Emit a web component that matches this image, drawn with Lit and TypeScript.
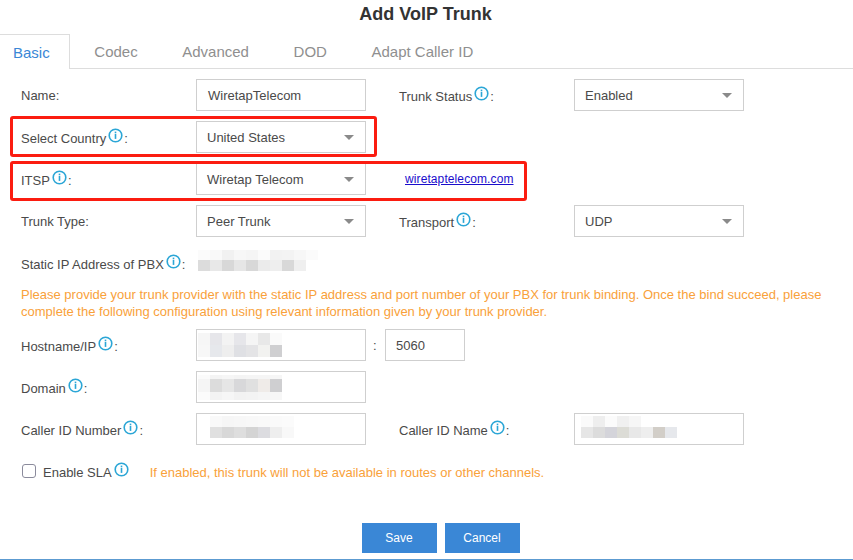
import { LitElement, html, css, svg } from 'lit';
import { customElement } from 'lit/decorators.js';

const info = html`<svg class="info" width="15" height="15" viewBox="0 0 15 15">
  ${svg`<circle cx="7.5" cy="7.5" r="6.3" fill="none" stroke="#2ba6d6" stroke-width="1.6"/>
  <rect x="6.7" y="3.6" width="1.6" height="1.6" fill="#2ba6d6"/>
  <rect x="6.7" y="5.9" width="1.6" height="5" fill="#2ba6d6"/>`}
</svg>`;

// pixelated areas where the reference has its values masked
const staticIp = [
  ['#fbfbfb', '#f9f9f9', '#f1f1f1', '#f7f7f7', '#f5f5f5', '#fbfbfb', '#f2f2f2', '#f3f3f3', '#f7f7f7', '#fbfbfb'],
  ['#dcdcdc', '#e8e8e8', '#d8d8d8', '#e6e6e6', '#d8d8d8', '#ebebeb', '#eeeeee', '#d8d8d8', '#efefef', '#ffffff'],
];
const hostIp = [
  ['#f6f6f6', '#e6e6ea', '#f3f3f3', '#e6e6ea', '#f5f5f5', '#e8e8e8', '#fafafa'],
  ['#f7f7f7', '#e6e8ec', '#eeeeee', '#dfe0e4', '#e4e4e6', '#f2f2f0', '#cfcfd1'],
];
const domainVal = [
  ['#fbfbfb', '#f4f4f4', '#f6f6f6', '#f4f4f4', '#f5f5f5', '#f5f5f5', '#f6f6f6'],
  ['#f5f5f5', '#dcdcdc', '#e6e6e6', '#d8d8da', '#e0e0e0', '#efebe8', '#cfcfd1'],
  ['#fbfbfb', '#f3f3f3', '#f6f6f6', '#f2f2f2', '#f3f3f3', '#f5f5f5', '#f7f7f7'],
];
const callerNum = [
  ['#f9f9f9', '#f6f6f6', '#f7f7f7', '#f8f8f8', '#f9f9f9', '#fafafa', '#fbfbfb'],
  ['#e0e0e0', '#d8d8d8', '#dedede', '#d4d4d4', '#dcdce0', '#eeeeee', '#f8f8f8'],
];
const callerName = [
  ['#fafafa', '#eeeeee', '#fbfbfb', '#f0f0f0', '#f6f6f6', '#ffffff', '#ffffff', '#ffffff'],
  ['#e6e6e6', '#dcdcdc', '#d4d4da', '#dcdcd6', '#e8e8e8', '#eeeeee', '#d2cec8', '#e6e8ec'],
];

@customElement('app-root')
export class AppRoot extends LitElement {
  static styles = css`
    :host {
      display: block;
      box-sizing: border-box;
      width: 853px;
      height: 560px;
      position: relative;
      overflow: hidden;
      background: #fff;
      font-family: 'Liberation Sans', Arial, sans-serif;
      font-size: 13px;
      color: #4a4a4a;
      border-bottom: 1px solid #5c9bd1;
    }

    h1 {
      margin: 0;
      height: 34px;
      padding: 4px 2px 0 0;
      box-sizing: border-box;
      text-align: center;
      font-size: 18px;
      line-height: 20px;
      font-weight: bold;
      color: #333;
    }

    .tabs {
      display: flex;
      height: 35px;
      box-sizing: border-box;
      border-bottom: 1px solid #ddd;
    }

    .tab {
      font-size: 15px;
      line-height: 36px;
      color: #8f8f8f;
      padding: 0 22.3px;
    }

    .tab.active {
      color: #3a87d6;
      width: 70px;
      margin-right: 2px;
      padding: 0 0 0 13px;
      height: 35px;
      box-sizing: border-box;
      border: 1px solid #ddd;
      border-width: 1px 1px 0 0;
      background: #fff;
    }

    .form {
      padding: 10px 0 0 21px;
    }

    .row {
      display: grid;
      grid-template-columns: 175px 170px 33px 175px 170px;
      align-items: center;
      height: 32px;
      margin-bottom: 10px;
    }

    .label {
      display: flex;
      align-items: center;
      white-space: nowrap;
    }

    .label.hinted {
      padding-top: 2px;
    }

    .info {
      margin: -5px 1px 0 2px;
      flex: none;
    }

    .field {
      box-sizing: border-box;
      height: 32px;
      width: 170px;
      border: 1px solid #cfcfcf;
      display: flex;
      align-items: center;
      padding: 0 11px;
      color: #4a4a4a;
      background: #fff;
    }

    .select {
      justify-content: space-between;
      padding: 0 11px 0 10px;
    }

    .caret {
      width: 0;
      height: 0;
      border-left: 5px solid transparent;
      border-right: 5px solid transparent;
      border-top: 5px solid #8a8a8a;
    }

    .link {
      color: #1a0dcc;
      text-decoration: underline;
      font-size: 12px;
      letter-spacing: 0.1px;
      margin-left: 6px;
    }

    .static-row {
      display: grid;
      grid-template-columns: 175px auto;
      align-items: center;
      height: 32px;
    }

    .note {
      color: #f9a13a;
      font-size: 13px;
      line-height: 17px;
      margin: 7px 0 9px;
      white-space: nowrap;
    }

    .port-row {
      grid-column: 3 / span 2;
      display: flex;
      align-items: center;
      padding-left: 7px;
    }

    .colon {
      width: 12px;
    }

    .port {
      width: 80px;
      padding: 0 10px;
    }

    .smudge {
      flex: none;
      filter: blur(0.4px);
    }

    .smudge-row {
      display: flex;
    }

    .cell {
      width: 12px;
    }

    .field.masked {
      padding: 0 0 0 1px;
    }

    .field.masked.caller {
      padding-left: 13px;
    }

    .field.masked.name {
      padding-left: 6px;
    }

    .field.masked.caller .smudge,
    .field.masked.name .smudge {
      margin-bottom: 4px;
    }

    .ip {
      margin: -6px 0 0 2px;
    }

    .sla {
      display: flex;
      align-items: center;
      height: 20px;
      margin-top: 17px;
    }

    .check {
      box-sizing: border-box;
      width: 14px;
      height: 14px;
      margin: -3px 0 0 1px;
      border: 1px solid #8b8b9c;
      border-radius: 3px;
      background: #fff;
    }

    .sla-text {
      margin-left: 7px;
    }

    .sla-note {
      color: #f9a13a;
      font-size: 13px;
      margin-left: 20px;
    }

    .actions {
      display: flex;
      justify-content: center;
      gap: 8px;
      margin-top: 41px;
      padding-left: 28px;
    }

    .btn {
      width: 75px;
      height: 30px;
      background: #3a87d6;
      color: #fff;
      font-size: 12px;
      display: flex;
      align-items: center;
      justify-content: center;
    }

    /* annotation boxes drawn over the screenshot */
    .mark {
      position: absolute;
      box-sizing: border-box;
      border: 3px solid #fb1c10;
      border-radius: 3px;
      pointer-events: none;
    }

    .mark.country {
      left: 10px;
      top: 116px;
      width: 367px;
      height: 41px;
    }

    .mark.itsp {
      left: 10px;
      top: 161px;
      width: 517px;
      height: 40px;
    }
  `;

  private label(text: string) {
    return html`<div class="label hinted">${text}${info}:</div>`;
  }

  private select(value: string) {
    return html`<div class="field select"><span>${value}</span><span class="caret"></span></div>`;
  }

  private smudge(cells: string[][], heights: number[]) {
    return html`<div class="smudge">
      ${cells.map(
        (row, i) => html`<div class="smudge-row">
          ${row.map((c) => html`<div class="cell" style="background:${c};height:${heights[i]}px"></div>`)}
        </div>`
      )}
    </div>`;
  }

  render() {
    return html`
      <h1>Add VoIP Trunk</h1>
      <div class="tabs">
        <div class="tab active">Basic</div>
        <div class="tab">Codec</div>
        <div class="tab">Advanced</div>
        <div class="tab">DOD</div>
        <div class="tab">Adapt Caller ID</div>
      </div>
      <div class="form">
        <div class="row">
          <div class="label">Name:</div>
          <div class="field">WiretapTelecom</div>
          <div></div>
          ${this.label('Trunk Status')}
          ${this.select('Enabled')}
        </div>
        <div class="row">
          ${this.label('Select Country')}
          ${this.select('United States')}
        </div>
        <div class="row">
          ${this.label('ITSP')}
          ${this.select('Wiretap Telecom')}
          <div></div>
          <a class="link">wiretaptelecom.com</a>
        </div>
        <div class="row">
          <div class="label">Trunk Type:</div>
          ${this.select('Peer Trunk')}
          <div></div>
          ${this.label('Transport')}
          ${this.select('UDP')}
        </div>
        <div class="static-row">
          ${this.label('Static IP Address of PBX')}
          <div class="ip">${this.smudge(staticIp, [10, 11])}</div>
        </div>
        <div class="note">
          Please provide your trunk provider with the static IP address and port number of your PBX for trunk binding. Once the bind succeed, please<br />
          complete the following configuration using relevant information given by your trunk provider.
        </div>
        <div class="row">
          ${this.label('Hostname/IP')}
          <div class="field masked">${this.smudge(hostIp, [12, 12])}</div>
          <div class="port-row">
            <span class="colon">:</span>
            <div class="field port">5060</div>
          </div>
        </div>
        <div class="row">
          ${this.label('Domain')}
          <div class="field masked">${this.smudge(domainVal, [4, 13, 8])}</div>
        </div>
        <div class="row">
          ${this.label('Caller ID Number')}
          <div class="field masked caller">${this.smudge(callerNum, [11, 11])}</div>
          <div></div>
          ${this.label('Caller ID Name')}
          <div class="field masked name">${this.smudge(callerName, [11, 11])}</div>
        </div>
        <div class="sla">
          <span class="check"></span>
          <span class="sla-text">Enable SLA</span>${info}
          <span class="sla-note">If enabled, this trunk will not be available in routes or other channels.</span>
        </div>
      </div>
      <div class="actions">
        <div class="btn">Save</div>
        <div class="btn">Cancel</div>
      </div>
      <div class="mark country"></div>
      <div class="mark itsp"></div>
    `;
  }
}
